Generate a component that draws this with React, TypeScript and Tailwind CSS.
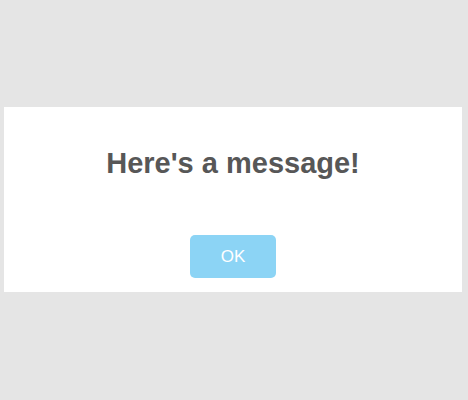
import React from 'react';

const App: React.FC = () => {
  return (
    <div
      className="w-[468px] h-[400px] bg-[#e5e5e5] pt-[107px]"
      style={{ fontFamily: '"Liberation Sans", Arial, sans-serif' }}
    >
      <div className="ml-[4px] w-[458px] h-[185px] bg-white flex flex-col items-center pt-[38px]">
        <h2 className="text-[29px] leading-[36px] font-bold text-[#575757]">Here's a message!</h2>
        <button className="mt-[54px] w-[86px] h-[43px] rounded-[5px] bg-[#8cd4f5] text-white text-[17px]">
          OK
        </button>
      </div>
    </div>
  );
};

export default App;
